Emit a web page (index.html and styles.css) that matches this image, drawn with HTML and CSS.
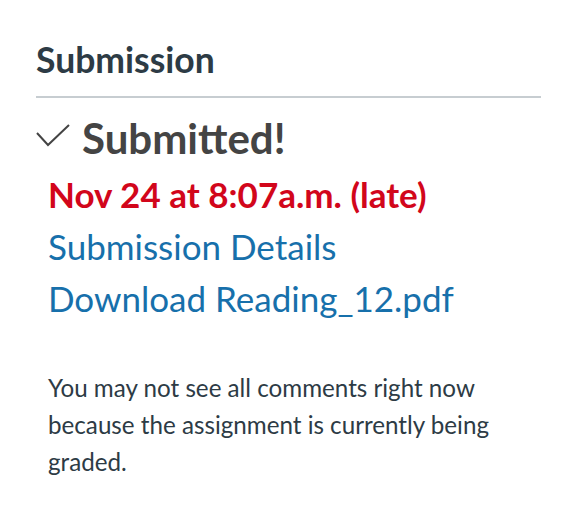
FILE: index.html
```html
<!DOCTYPE html>
<html>
<head>
<meta charset="utf-8">
<link rel="stylesheet" href="styles.css">
</head>
<body>
<section class="panel">
  <h2 class="title">Submission</h2>
  <div class="status">
    <svg class="check" viewBox="0 0 34 23" width="34" height="23" aria-hidden="true">
      <polyline points="1,9 12,21 33,1" fill="none" stroke="#444" stroke-width="2"/>
    </svg>
    <span class="status-text">Submitted!</span>
  </div>
  <div class="details">
    <div class="date">Nov 24 at 8:07a.m. (late)</div>
    <a class="link" href="#">Submission Details</a>
    <a class="link" href="#">Download Reading_12.pdf</a>
    <p class="note">You may not see all comments right now because the assignment is currently being graded.</p>
  </div>
</section>
</body>
</html>
```
FILE: styles.css
```css
html, body {
  margin: 0;
  padding: 0;
  background: #ffffff;
}
body {
  font-family: Lato, "Noto Sans", sans-serif;
}
.panel {
  padding: 38px 27px 0 36px;
}
.title {
  margin: 0;
  font-size: 35.5px;
  font-weight: 700;
  line-height: 44px;
  color: #2d3b45;
  padding-bottom: 14px;
  border-bottom: 2px solid #c7cdd1;
}
.status {
  display: flex;
  align-items: center;
  gap: 12px;
  margin-top: 12px;
}
.check {
  display: block;
  margin-top: -6px;
}
.status-text {
  font-size: 42px;
  font-weight: 700;
  line-height: 56px;
  color: #444444;
}
.details {
  padding-left: 12px;
  margin-top: 2px;
  display: flex;
  flex-direction: column;
  align-items: flex-start;
}
.date {
  font-size: 35px;
  font-weight: 700;
  line-height: 52px;
  color: #d2061b;
}
.link {
  font-size: 35px;
  line-height: 52px;
  color: #1770ab;
  text-decoration: none;
}
.note {
  margin: 45px 0 0 0;
  font-size: 24.2px;
  line-height: 37px;
  color: #2d3b45;
  max-width: 460px;
}
```
